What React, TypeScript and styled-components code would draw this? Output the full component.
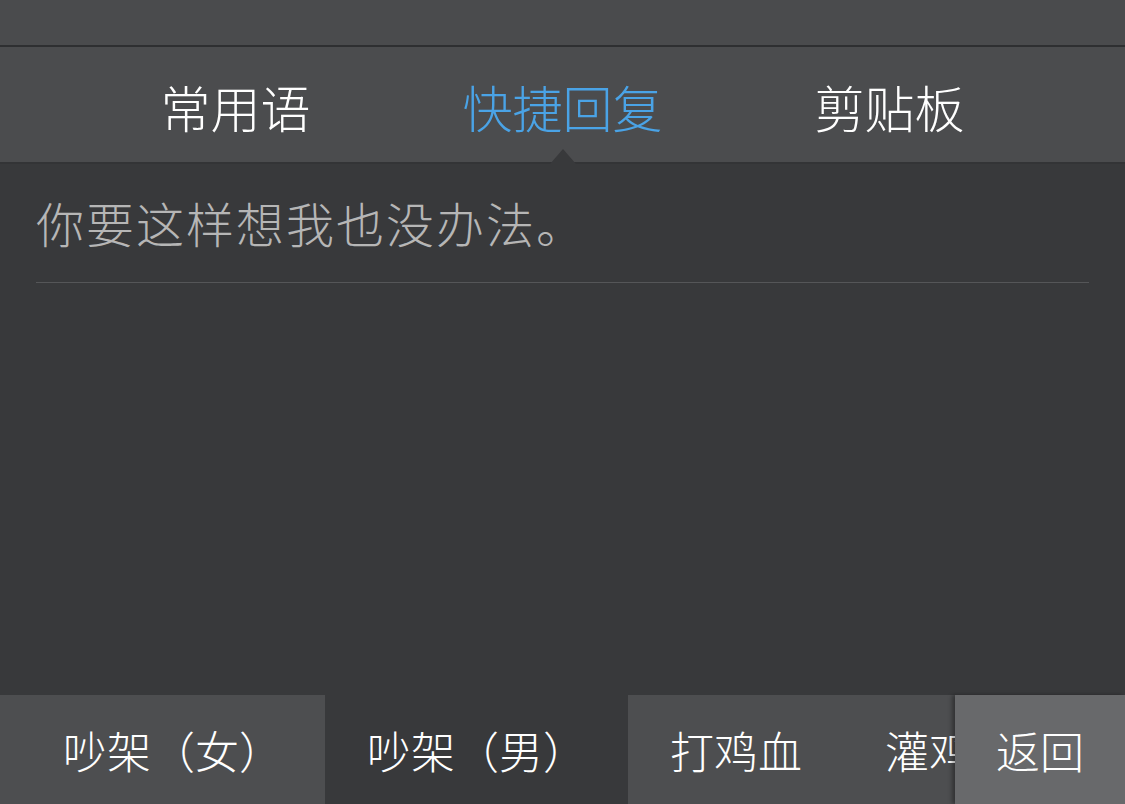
import React from "react";
import styled, { createGlobalStyle } from "styled-components";

const Global = createGlobalStyle`
  html, body { margin: 0; padding: 0; background: #38393b; }
  body { font-family: "Noto Sans CJK SC", "Noto Sans", sans-serif; }
  #root { width: 1125px; height: 804px; }
`;

const Screen = styled.div`
  width: 1125px;
  height: 804px;
  display: flex;
  flex-direction: column;
  background: #38393b;
  overflow: hidden;
`;

const StatusBar = styled.div`
  height: 45px;
  background: #4a4b4d;
  border-bottom: 2px solid #2e2f31;
  flex: none;
`;

const TabBar = styled.div`
  height: 115px;
  background: #4b4c4e;
  border-bottom: 2px solid #333436;
  display: flex;
  justify-content: center;
  align-items: center;
  gap: 152px;
  flex: none;
`;

const Tab = styled.div<{ $active?: boolean }>`
  position: relative;
  height: 115px;
  display: flex;
  align-items: center;
  font-size: 50px;
  font-weight: 300;
  color: ${(p) => (p.$active ? "#4aa3e6" : "#ffffff")};
  padding-top: 2px;
  box-sizing: border-box;
`;

const Caret = styled.span`
  position: absolute;
  left: 50%;
  bottom: -2px;
  transform: translateX(-50%);
  width: 0;
  height: 0;
  border-left: 13px solid transparent;
  border-right: 13px solid transparent;
  border-bottom: 15px solid #38393b;
`;

const Content = styled.div`
  flex: 1;
  padding: 0 36px;
`;

const Phrase = styled.div`
  height: 119px;
  display: flex;
  align-items: center;
  padding-bottom: 2px;
  box-sizing: border-box;
  border-bottom: 1px solid #555658;
  color: #b6b6b6;
  font-size: 48px;
  font-weight: 300;
  letter-spacing: 2px;
`;

const BottomBar = styled.div`
  height: 109px;
  display: flex;
  flex: none;
  background: #4d4e50;
`;

const Categories = styled.div`
  flex: 1;
  display: flex;
  overflow: hidden;
  white-space: nowrap;
`;

const Category = styled.div<{ $selected?: boolean }>`
  flex: none;
  display: flex;
  align-items: center;
  padding: 0 41px 0 42px;
  font-size: 44px;
  font-weight: 300;
  color: #ffffff;
  background: ${(p) => (p.$selected ? "#38393b" : "#4d4e50")};
`;

const FirstCategory = styled(Category)`
  padding-left: 63px;
  padding-right: 42px;
`;

const BackButton = styled.div`
  width: 170px;
  flex: none;
  display: flex;
  align-items: center;
  justify-content: center;
  background: #68696b;
  box-shadow: -3px 0 4px rgba(0, 0, 0, 0.35);
  font-size: 44px;
  font-weight: 300;
  color: #ffffff;
  position: relative;
  z-index: 1;
`;

export default function App() {
  return (
    <Screen>
      <Global />
      <StatusBar />
      <TabBar>
        <Tab>常用语</Tab>
        <Tab $active>
          快捷回复
          <Caret />
        </Tab>
        <Tab>剪贴板</Tab>
      </TabBar>
      <Content>
        <Phrase>你要这样想我也没办法。</Phrase>
      </Content>
      <BottomBar>
        <Categories>
          <FirstCategory>吵架（女）</FirstCategory>
          <Category $selected>吵架（男）</Category>
          <Category>打鸡血</Category>
          <Category>灌鸡汤</Category>
        </Categories>
        <BackButton>返回</BackButton>
      </BottomBar>
    </Screen>
  );
}
